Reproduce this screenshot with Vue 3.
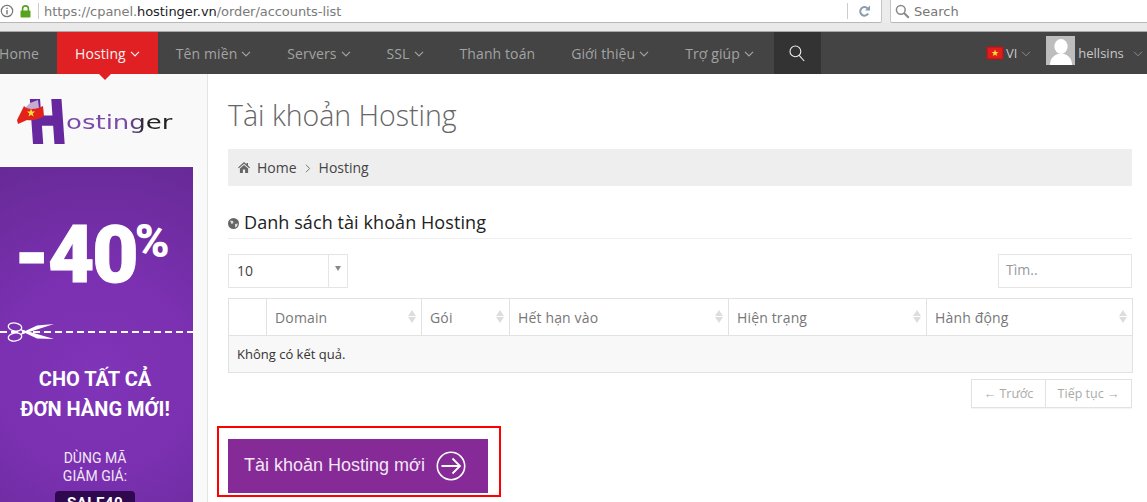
<template>
  <div class="page">
    <div class="browser-bar">
      <div class="url-box">
        <svg class="info-icon" width="14" height="14" viewBox="0 0 14 14">
          <circle cx="7" cy="7" r="5.7" fill="none" stroke="#777" stroke-width="1.2" />
          <rect x="6.3" y="6" width="1.4" height="4.4" fill="#777" />
          <rect x="6.3" y="3.6" width="1.4" height="1.4" fill="#777" />
        </svg>
        <svg class="lock-icon" width="11" height="13" viewBox="0 0 11 13">
          <path d="M2.6 6V3.8a2.9 2.9 0 0 1 5.8 0V6" fill="none" stroke="#57a31f" stroke-width="1.6" />
          <rect x="0.5" y="5.5" width="10" height="7" rx="1" fill="#57a31f" />
        </svg>
        <span class="url-sep"></span>
        <span class="url">https://cpanel.<b>hostinger.vn</b>/order/accounts-list</span>
        <span class="reload-sep"></span>
        <svg class="reload" width="13" height="13" viewBox="0 0 13 13">
          <path d="M10.2 8.6A4.3 4.3 0 1 1 9.6 3.4" fill="none" stroke="#8b9bab" stroke-width="2" />
          <path d="M7 5.4h5V0.6z" fill="#8b9bab" />
        </svg>
      </div>
      <div class="search-box">
        <svg width="15" height="15" viewBox="0 0 15 15">
          <circle cx="5.8" cy="5.8" r="4.4" fill="none" stroke="#888" stroke-width="1.5" />
          <path d="M9 9l4.8 4.8" stroke="#888" stroke-width="2" />
        </svg>
        <span>Search</span>
      </div>
    </div>
    <div class="browser-gap"></div>

    <nav class="nav">
      <a
        v-for="item in menu"
        :key="item.label"
        class="nav-item"
        :class="{ active: item.active, first: item.first }"
      >
        {{ item.label }}
        <svg v-if="item.caret" class="caret" width="10" height="6" viewBox="0 0 10 6">
          <path d="M1 .8l4 4 4-4" fill="none" stroke="currentColor" stroke-width="1.2" />
        </svg>
      </a>
      <div class="nav-search">
        <svg width="16" height="17" viewBox="0 0 16 17">
          <circle cx="6.4" cy="6.4" r="5.4" fill="none" stroke="#eee" stroke-width="1.1" />
          <path d="M10.2 10.4l5 5.6" stroke="#eee" stroke-width="1.1" />
        </svg>
      </div>
      <div class="nav-right">
        <span class="flag"><i>★</i></span>
        <span class="lang">VI</span>
        <svg class="caret dim" width="10" height="6" viewBox="0 0 10 6">
          <path d="M1 .8l4 4 4-4" fill="none" stroke="currentColor" stroke-width="1" />
        </svg>
        <span class="avatar">
          <svg width="29" height="29" viewBox="0 0 29 29">
            <rect width="29" height="29" fill="#bdbdbd" />
            <ellipse cx="15" cy="10.5" rx="6.6" ry="7.5" fill="#fff" />
            <path d="M4 29c0-7 4-9.500 8-11h6c4 1.500 8 4 8 11z" fill="#fff" />
          </svg>
        </span>
        <span class="user">hellsins</span>
        <svg class="caret dim user-caret" width="10" height="6" viewBox="0 0 10 6">
          <path d="M1 .8l4 4 4-4" fill="none" stroke="currentColor" stroke-width="1" />
        </svg>
      </div>
    </nav>

    <div class="body">
      <aside class="sidebar">
        <div class="logo">
          <div class="logo-mark">
            <span class="logo-h">H</span>
            <svg class="logo-scarf" width="30" height="28" viewBox="0 0 30 28">
              <path d="M9 9l5-5 8-3 1 8c-5 3-10 2-14 0z" fill="#c6abd3" />
              <path d="M1 21L8 7c3 4 12 4 19 0l1 10c-6 4-13 5-17 4l-9 4z" fill="#e2231c" />
              <path d="M15 9.500l1.100 2.900 3 .1-2.400 1.900.9 3-2.600-1.700-2.500 1.700.9-3-2.400-1.900 3-.1z" fill="#ffe23a" />
            </svg>
          </div>
          <span class="logo-text">ostinger</span>
        </div>
        <div class="promo">
          <div class="promo-big"><span class="num">-40</span><span class="pct">%</span></div>
          <div class="promo-cut">
            <svg width="50" height="22" viewBox="0 0 50 22">
              <ellipse cx="8" cy="6" rx="6.800" ry="4" fill="none" stroke="#fff" stroke-width="1.300" transform="rotate(10 8 6)" />
              <ellipse cx="8" cy="16" rx="6.800" ry="4" fill="none" stroke="#fff" stroke-width="1.300" transform="rotate(-10 8 16)" />
              <path d="M13 8l34 10-17-.5-15-7zM13 14L47 3 30 4.500l-15 7z" fill="#fff" />
            </svg>
          </div>
          <div class="promo-title">CHO TẤT CẢ<br />ĐƠN HÀNG MỚI!</div>
          <div class="promo-small">DÙNG MÃ<br />GIẢM GIÁ:</div>
          <div class="promo-code">SALE40</div>
        </div>
      </aside>

      <main class="main">
        <h1>Tài khoản Hosting</h1>
        <div class="crumbs">
          <svg width="12" height="11" viewBox="0 0 12 11">
            <path d="M6 0L0 5.400l.8.800L6 1.700l5.200 4.500.8-.8-2-1.800V1H8.500v1.300zM1.900 6.400V11h3V7.600h2.200V11h3V6.400L6 2.900z" fill="#666" />
          </svg>
          <span>Home</span>
          <svg class="crumb-sep" width="6" height="9" viewBox="0 0 6 9">
            <path d="M1 .8l3.600 3.700L1 8.200" fill="none" stroke="#777" stroke-width="1" />
          </svg>
          <span>Hosting</span>
        </div>

        <h2>
          <svg width="11" height="11" viewBox="0 0 11 11">
            <circle cx="5.500" cy="5.500" r="5.500" fill="#666" />
            <path d="M2 2.500l3 .5.500 2-2 1zM7 6l2.800-.5-.8 3-2 1z" fill="#ddd" />
          </svg>
          Danh sách tài khoản Hosting
        </h2>

        <div class="tools">
          <div class="select">
            <span class="select-val">10</span>
            <span class="select-arrow"><i></i></span>
          </div>
          <div class="filter">Tìm..</div>
        </div>

        <table class="grid">
          <colgroup>
            <col v-for="w in colWidths" :key="w" :style="{ width: w + 'px' }" />
          </colgroup>
          <thead>
            <tr>
              <th></th>
              <th v-for="c in columns" :key="c">
                {{ c }}
                <span class="sort"><i class="up"></i><i class="down"></i></span>
              </th>
            </tr>
          </thead>
          <tbody>
            <tr>
              <td colspan="6">Không có kết quả.</td>
            </tr>
          </tbody>
        </table>

        <div class="pager">
          <a class="prev">← Trước</a>
          <a class="next">Tiếp tục →</a>
        </div>

        <div class="highlight">
          <button class="new-btn">
            Tài khoản Hosting mới
            <svg width="30" height="30" viewBox="0 0 30 30">
              <circle cx="15" cy="15" r="13.700" fill="none" stroke="#fff" stroke-width="1.600" />
              <path d="M5.500 15h18M16.500 7.500l7.500 7.500-7.500 7.500" fill="none" stroke="#fff" stroke-width="1.800" />
            </svg>
          </button>
        </div>
      </main>
    </div>
  </div>
</template>

<script setup>
const menu = [
  { label: 'Home', first: true },
  { label: 'Hosting', caret: true, active: true },
  { label: 'Tên miền', caret: true },
  { label: 'Servers', caret: true },
  { label: 'SSL', caret: true },
  { label: 'Thanh toán' },
  { label: 'Giới thiệu', caret: true },
  { label: 'Trợ giúp', caret: true },
]
const columns = ['Domain', 'Gói', 'Hết hạn vào', 'Hiện trạng', 'Hành động']
const colWidths = [38, 155, 88, 219, 198, 206]
</script>

<style>
html,
body {
  margin: 0;
  background: #fff;
}
</style>

<style scoped>
.page {
  width: 1147px;
  height: 502px;
  overflow: hidden;
  font-family: "Open Sans", "Noto Sans", sans-serif;
  color: #333;
}

/* browser chrome */
.browser-bar {
  display: flex;
  height: 23px;
  background: #ececec;
  font-family: "DejaVu Sans", sans-serif;
  font-size: 13px;
}
.url-box {
  width: 882px;
  display: flex;
  align-items: center;
  background: #fff;
  border-right: 1px solid #c4c4c4;
  border-bottom: 1px solid #b8b8b8;
  box-sizing: border-box;
  border-radius: 0 0 2px 0;
}
.lock-icon {
  margin-left: 6px;
}
.url-sep {
  width: 1px;
  height: 16px;
  background: #ccc;
  margin: 0 5px 0 7px;
}
.url {
  color: #7a7a7a;
  white-space: nowrap;
  letter-spacing: -0.06px;
}
.url b {
  font-weight: normal;
  color: #222;
}
.reload-sep {
  width: 1px;
  height: 16px;
  background: #ccc;
  margin-left: auto;
}
.reload {
  margin: 0 10px 0 10px;
}
.search-box {
  flex: 1;
  margin-left: 8px;
  display: flex;
  align-items: center;
  gap: 4px;
  background: #fff;
  border-left: 1px solid #c4c4c4;
  border-bottom: 1px solid #b8b8b8;
  box-sizing: border-box;
  padding: 0 0 0 4px;
  border-radius: 0 0 0 2px;
  color: #777;
}
.browser-gap {
  height: 8px;
  background: #e9e9e9;
  border-bottom: 1px solid #a8a8a8;
}

/* top menu */
.nav {
  display: flex;
  height: 42px;
  background: #444;
  font-size: 14px;
  letter-spacing: 0.1px;
  color: #a3a3a3;
}
.nav-item {
  position: relative;
  display: flex;
  align-items: center;
  gap: 4px;
  padding: 0 18px;
  white-space: nowrap;
}
.nav-item.first {
  padding: 0 18px 0 0;
  margin-left: -1px;
}
.nav-item.active {
  background: #e02022;
  color: #f3f3f3;
}
.nav-item.active::after {
  content: "";
  position: absolute;
  left: 42px;
  bottom: -6px;
  border-top: 6px solid #e02022;
  border-left: 6px solid transparent;
  border-right: 6px solid transparent;
}
.caret {
  margin-top: 1px;
}
.nav-search {
  width: 47px;
  margin-left: 2px;
  display: flex;
  align-items: center;
  justify-content: center;
  background: #333;
}
.nav-right {
  flex: 1;
  display: flex;
  align-items: center;
  padding-left: 166px;
  font-size: 13px;
  letter-spacing: 0;
  color: #c8c8c8;
}
.flag {
  width: 16px;
  height: 12px;
  box-sizing: border-box;
  background: #e21b1b;
  border: 1px solid #f00;
  display: flex;
  align-items: center;
  justify-content: center;
}
.flag i {
  font-style: normal;
  font-size: 9px;
  line-height: 1;
  color: #ffe23a;
  font-family: "DejaVu Sans", sans-serif;
}
.lang {
  margin-left: 3px;
}
.dim {
  color: #8a8a8a;
  margin-left: 4px;
}
.avatar {
  display: block;
  width: 29px;
  height: 29px;
  margin-left: 15px;
  margin-top: -6px;
}
.user {
  margin-left: 3px;
  margin-top: -1px;
}
.user-caret {
  margin-left: 9px;
}

/* sidebar */
.body {
  display: flex;
  height: 428px;
}
.sidebar {
  width: 208px;
  flex: none;
  background: #f9f9f9;
  border-right: 1px solid #e4e4e4;
  box-sizing: border-box;
}
.logo {
  height: 92px;
  box-sizing: border-box;
  padding: 25px 0 0 16px;
  display: flex;
  align-items: flex-start;
}
.logo-mark {
  position: relative;
  width: 50px;
  height: 48px;
}
.logo-h {
  position: absolute;
  left: 10px;
  top: -6px;
  font-family: "DejaVu Sans", sans-serif;
  font-weight: bold;
  font-size: 59px;
  line-height: 1;
  color: #67289f;
  -webkit-text-stroke: 2px #67289f;
  transform: skewX(4deg) scaleX(0.78);
  transform-origin: left top;
}
.logo-scarf {
  position: absolute;
  left: 0;
  top: 0;
}
.logo-text {
  margin-top: 12px;
  font-family: "DejaVu Sans", sans-serif;
  font-size: 20px;
  line-height: 22px;
  transform: scaleX(1.3);
  transform-origin: left center;
  background: linear-gradient(90deg, #7a4aa8 0 58%, #222 75%);
  -webkit-background-clip: text;
  background-clip: text;
  color: transparent;
}
.promo {
  width: 193px;
  height: 336px;
  box-sizing: border-box;
  border-top: 1px solid #fff;
  padding-right: 3px;
  background: radial-gradient(circle at 50% 62%, #8034b8 0, #7a30b0 45%, #672a96 100%);
  color: #fff;
  font-family: Roboto, sans-serif;
  text-align: center;
}
.promo-big {
  display: flex;
  align-items: flex-start;
  padding: 41px 0 0 14px;
  height: 112px;
  box-sizing: border-box;
  font-weight: 900;
}
.promo-big .num {
  font-size: 80px;
  line-height: 94px;
  letter-spacing: -2px;
  -webkit-text-stroke: 1px #fff;
}
.promo-big .pct {
  font-size: 47px;
  line-height: 60px;
  margin-left: -2px;
  margin-top: 3px;
}
.promo-cut {
  height: 20px;
  margin-top: 42px;
  margin-right: -3px;
  position: relative;
  background: repeating-linear-gradient(90deg, #fff 0 7px, transparent 7px 11px) 0 10px / 100% 2px no-repeat;
  text-align: left;
}
.promo-cut svg {
  position: absolute;
  left: 7px;
  top: 0;
}
.promo-title {
  margin-top: 23px;
  font-size: 20px;
  line-height: 30px;
  font-weight: 700;
}
.promo-small {
  margin-top: 25px;
  font-size: 14px;
  line-height: 18px;
  color: #f0e6f6;
}
.promo-code {
  width: 80px;
  height: 34px;
  margin: 6px auto 0;
  background: #30084f;
  border-radius: 4px;
  font-weight: 700;
  font-size: 15px;
  line-height: 24px;
  letter-spacing: 0.5px;
}

/* main column */
.main {
  flex: 1;
  padding: 0 15px 0 20px;
  min-width: 0;
}
h1 {
  margin: 0;
  height: 75px;
  font-size: 28.5px;
  font-weight: 300;
  line-height: 83px;
  color: #666;
  white-space: nowrap;
}
.crumbs {
  height: 37px;
  display: flex;
  align-items: center;
  padding-left: 10px;
  background: #eee;
  font-size: 14px;
  color: #444;
  gap: 7px;
}
.crumb-sep {
  margin: 1px 1px 0;
}
h2 {
  margin: 19px 0 0;
  height: 33px;
  display: flex;
  align-items: center;
  gap: 5px;
  border-bottom: 1px solid #eee;
  padding-bottom: 0;
  font-size: 18px;
  font-weight: 400;
  letter-spacing: 0.08px;
  line-height: 28px;
  color: #222;
}
h2 svg {
  margin-top: 3px;
}
.tools {
  display: flex;
  justify-content: space-between;
  margin-top: 15px;
}
.select {
  width: 120px;
  height: 34px;
  box-sizing: border-box;
  border: 1px solid #e5e5e5;
  display: flex;
  font-size: 14px;
  color: #444;
}
.select-val {
  flex: 1;
  line-height: 32px;
  padding-left: 8px;
}
.select-arrow {
  width: 19px;
  border-left: 1px solid #e5e5e5;
  display: flex;
  justify-content: center;
  padding-top: 11px;
  box-sizing: border-box;
}
.select-arrow i {
  width: 0;
  height: 0;
  border-top: 5px solid #888;
  border-left: 3px solid transparent;
  border-right: 3px solid transparent;
}
.filter {
  width: 134px;
  height: 34px;
  box-sizing: border-box;
  border: 1px solid #e5e5e5;
  padding-left: 7px;
  font-size: 14px;
  line-height: 30px;
  color: #999;
}
.grid {
  width: 904px;
  margin-top: 10px;
  border-collapse: collapse;
  table-layout: fixed;
  font-size: 14px;
}
.grid th,
.grid td {
  border: 1px solid #e2e2e2;
  text-align: left;
  font-weight: 400;
  box-sizing: border-box;
  padding: 0 8px;
}
.grid th {
  position: relative;
  height: 37px;
  color: #777;
  letter-spacing: 0.15px;
}
.grid td {
  height: 37px;
  background: #f8f8f8;
  font-size: 13px;
  color: #333;
}
.sort {
  position: absolute;
  right: 5px;
  top: 11px;
  display: flex;
  flex-direction: column;
  gap: 1px;
}
.sort i {
  width: 0;
  height: 0;
  border-left: 4px solid transparent;
  border-right: 4px solid transparent;
}
.sort .up {
  border-bottom: 6px solid #ddd;
}
.sort .down {
  border-top: 6px solid #ddd;
}
.pager {
  display: flex;
  justify-content: flex-end;
  margin-top: 6px;
  font-size: 12.5px;
  color: #aaa;
}
.pager a {
  height: 29px;
  box-sizing: border-box;
  border: 1px solid #e2e2e2;
  line-height: 27px;
  text-align: center;
  box-shadow: 0 1px 1px rgba(0, 0, 0, 0.04);
  white-space: nowrap;
}
.pager .prev {
  width: 74px;
  border-right: 0;
}
.pager .next {
  width: 87px;
}
.highlight {
  width: 284px;
  height: 71px;
  box-sizing: border-box;
  margin: 18px 0 0 -11px;
  border: 2px solid #f00;
  padding: 11px 0 0 9px;
}
.new-btn {
  width: 260px;
  height: 54px;
  display: flex;
  align-items: center;
  gap: 11px;
  padding: 0 0 2px 16px;
  border: none;
  background: #852a96;
  color: #f3e6f5;
  font-family: "Liberation Sans", Arial, sans-serif;
  font-size: 18px;
  white-space: nowrap;
}
.new-btn svg {
  margin-top: 2px;
}
</style>
